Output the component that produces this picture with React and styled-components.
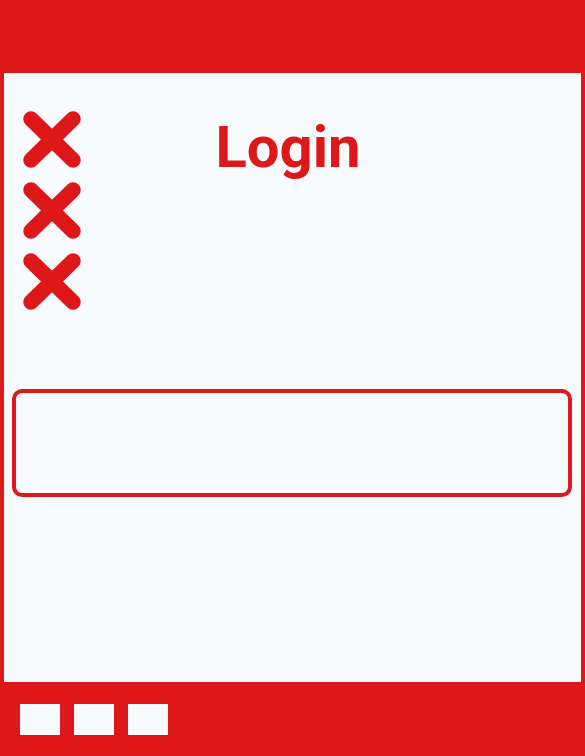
import React from "react";
import styled, { createGlobalStyle } from "styled-components";

const RED = "#de1818";
const BG = "#f8fbfe";

const Global = createGlobalStyle`
  html, body { margin: 0; padding: 0; background: ${BG}; }
  * { box-sizing: border-box; }
`;

const Page = styled.div`
  display: flex;
  flex-direction: column;
  width: 585px;
  height: 756px;
  font-family: Roboto, "Liberation Sans", sans-serif;
`;

const TopBar = styled.div`
  height: 73px;
  background: ${RED};
  flex: none;
`;

const Main = styled.main`
  flex: 1;
  background: ${BG};
  border-left: 4px solid ${RED};
  border-right: 4px solid ${RED};
  display: flex;
  flex-direction: column;
`;

const Header = styled.div`
  display: grid;
  grid-template-columns: 1fr auto 1fr;
  padding: 38px 28px 0 19px;
`;

const Crosses = styled.div`
  display: flex;
  flex-direction: column;
  gap: 14px;
  justify-self: start;
`;

const Title = styled.h1`
  margin: 7px 0 0;
  font-size: 58px;
  line-height: 1;
  font-weight: 700;
  color: ${RED};
  align-self: start;
`;

const Field = styled.div`
  margin: 79px 9px 0 8px;
  height: 108px;
  border: 4px solid ${RED};
  border-radius: 10px;
  background: ${BG};
`;

const BottomBar = styled.footer`
  height: 74px;
  flex: none;
  background: ${RED};
  display: flex;
  gap: 14px;
  padding: 22px 20px 0;
`;

const Square = styled.div`
  width: 40px;
  height: 31px;
  background: ${BG};
`;

const Cross = () => (
  <svg width="58" height="57" viewBox="0 0 58 57">
    <g stroke={RED} strokeWidth="15.5" strokeLinecap="round">
      <line x1="8" y1="8" x2="50" y2="49" />
      <line x1="50" y1="8" x2="8" y2="49" />
    </g>
  </svg>
);

export default function App() {
  return (
    <>
      <Global />
      <Page>
        <TopBar />
        <Main>
          <Header>
            <Crosses>
              <Cross />
              <Cross />
              <Cross />
            </Crosses>
            <Title>Login</Title>
            <div />
          </Header>
          <Field />
        </Main>
        <BottomBar>
          <Square />
          <Square />
          <Square />
        </BottomBar>
      </Page>
    </>
  );
}
